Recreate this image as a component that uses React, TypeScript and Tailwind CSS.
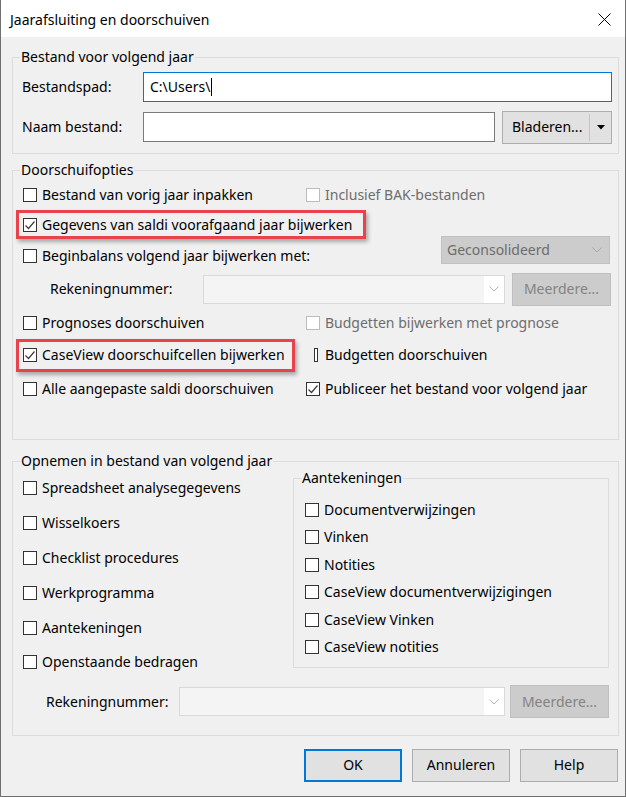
import clsx from "clsx";

const FONT = "font-['Noto_Sans',sans-serif]";

function Check() {
  return (
    <svg width="12" height="12" viewBox="0 0 12 12" fill="none">
      <polyline points="1.5,6.5 4.5,9.5 10.5,2.5" stroke="#3c3c3c" strokeWidth="1.2" />
    </svg>
  );
}

function Box({ checked, disabled }: { checked?: boolean; disabled?: boolean }) {
  return (
    <span
      className={clsx(
        "flex h-[14px] w-[14px] shrink-0 items-center justify-center border bg-white",
        disabled ? "border-[#bcbcbc]" : "border-[#333333]",
      )}
    >
      {checked ? <Check /> : null}
    </span>
  );
}

function CheckItem({
  label,
  checked,
  disabled,
}: {
  label: string;
  checked?: boolean;
  disabled?: boolean;
}) {
  return (
    <div className="flex items-center gap-[5px] whitespace-nowrap">
      <Box checked={checked} disabled={disabled} />
      <span className={disabled ? "text-[#6d6d6d]" : "text-black"}>{label}</span>
    </div>
  );
}

function Chevron({ color = "#a6a6a6" }: { color?: string }) {
  return (
    <svg width="10" height="6" viewBox="0 0 10 6" fill="none">
      <polyline points="0.5,0.5 5,5 9.5,0.5" stroke={color} strokeWidth="1" />
    </svg>
  );
}

function DisabledCombo({ width }: { width: string }) {
  return (
    <div
      className={clsx(
        "flex h-[29px] items-stretch border border-[#d9d9d9] bg-[#f4f4f4]",
        width,
      )}
    >
      <div className="flex-1" />
      <div className="flex w-[20px] items-center justify-center bg-white">
        <Chevron color="#b4b4b4" />
      </div>
    </div>
  );
}

function DisabledButton({ label, width, height }: { label: string; width: string; height: string }) {
  return (
    <div
      className={clsx(
        "flex items-center justify-center border border-[#bfbfbf] bg-[#cccccc] text-[#838383]",
        width,
        height,
      )}
    >
      {label}
    </div>
  );
}

function Button({ label, primary }: { label: string; primary?: boolean }) {
  return (
    <button
      type="button"
      className={clsx(
        "flex h-[33px] w-[98px] items-center justify-center bg-[#e1e1e1] text-black",
        primary ? "border-2 border-[#0078d7]" : "border border-[#adadad]",
      )}
    >
      {label}
    </button>
  );
}

function RedMark({ className }: { className: string }) {
  return (
    <div
      className={clsx(
        "pointer-events-none absolute border-[3px] border-[#e8434b] shadow-[2px_3px_4px_rgba(0,0,0,0.3)]",
        className,
      )}
    />
  );
}

export default function App() {
  return (
    <div
      className={clsx(
        "flex h-[797px] w-[626px] flex-col border-x border-b border-[#707070] bg-[#f0f0f0] text-[14px] leading-[20px] text-black",
        FONT,
      )}
    >
      {/* title bar */}
      <div className="flex h-[37px] shrink-0 items-center justify-between bg-white pl-[9px] pr-[14px] pt-[2px]">
        <span>Jaarafsluiting en doorschuiven</span>
        <svg width="13" height="13" viewBox="0 0 13 13" fill="none">
          <path d="M0.5 0.5L12.5 12.5M12.5 0.5L0.5 12.5" stroke="#000" strokeWidth="1" />
        </svg>
      </div>

      {/* Bestand voor volgend jaar */}
      <fieldset className="ml-[11px] mt-[10px] w-[607px] border border-[#dcdcdc] px-0">
        <legend className="ml-[7px] px-[1px]">Bestand voor volgend jaar</legend>
        <div className="flex flex-col pb-[10px] pl-[9px] pt-[5px]">
          <div className="flex h-[30px] items-center">
            <span className="w-[121px]">Bestandspad:</span>
            <div className="flex h-[30px] w-[469px] items-center border border-[#0078d7] bg-white pl-[6px]">
              <span>C:\Users\</span>
              <span className="ml-[1px] h-[18px] w-px bg-black" />
            </div>
          </div>
          <div className="mt-[9px] flex h-[32px] items-center">
            <span className="w-[121px]">Naam bestand:</span>
            <div className="h-[30px] w-[352px] border border-[#7a7a7a] bg-white" />
            <div className="ml-[7px] flex h-[33px] w-[110px] items-stretch border border-[#adadad] bg-[#e1e1e1]">
              <span className="flex flex-1 items-center pl-[9px]">Bladeren...</span>
              <span className="my-[2px] w-px bg-[#c4c4c4]" />
              <span className="flex w-[21px] items-center justify-center">
                <svg width="8" height="5" viewBox="0 0 8 5">
                  <polygon points="0,0 8,0 4,4.5" fill="#000" />
                </svg>
              </span>
            </div>
          </div>
        </div>
      </fieldset>

      {/* Doorschuifopties */}
      <fieldset className="ml-[11px] mt-[6px] w-[607px] border border-[#dcdcdc] px-0">
        <legend className="ml-[7px] px-[1px]">Doorschuifopties</legend>
        <div className="flex flex-col pb-[31px] pl-[10px]">
          <div className="flex h-[30px] items-center">
            <div className="w-[283px]">
              <CheckItem label="Bestand van vorig jaar inpakken" />
            </div>
            <CheckItem label="Inclusief BAK-bestanden" disabled />
          </div>
          <div className="relative flex h-[30px] items-center">
            <CheckItem label="Gegevens van saldi voorafgaand jaar bijwerken" checked />
            <RedMark className="-left-[7px] top-0 h-[29px] w-[350px]" />
          </div>
          <div className="flex h-[32px] items-center">
            <div className="w-[283px]">
              <CheckItem label="Beginbalans volgend jaar bijwerken met:" />
            </div>
            <div className="mb-[13px] ml-[135px] flex h-[28px] w-[169px] items-center justify-between border border-[#c0c0c0] bg-[#cccccc] pl-[5px] pr-[7px] text-[#6d6d6d]">
              <span>Geconsolideerd</span>
              <Chevron color="#a8a8a8" />
            </div>
          </div>
          <div className="flex h-[34px] items-center">
            <span className="w-[180px] pl-[27px]">Rekeningnummer:</span>
            <DisabledCombo width="w-[302px]" />
            <div className="ml-[7px]">
              <DisabledButton label="Meerdere..." width="w-[99px]" height="h-[33px]" />
            </div>
          </div>
          <div className="flex h-[34px] items-center">
            <div className="w-[283px]">
              <CheckItem label="Prognoses doorschuiven" />
            </div>
            <CheckItem label="Budgetten bijwerken met prognose" disabled />
          </div>
          <div className="relative flex h-[30px] items-center">
            <div className="w-[283px]">
              <CheckItem label="CaseView doorschuifcellen bijwerken" checked />
            </div>
            <div className="flex items-center whitespace-nowrap">
              <span className="ml-[8px] h-[14px] w-[4px] border border-[#333333] bg-white" />
              <span className="ml-[7px]">Budgetten doorschuiven</span>
            </div>
            <RedMark className="-left-[7px] -top-[1px] h-[33px] w-[279px]" />
          </div>
          <div className="flex h-[38px] items-center">
            <div className="w-[283px]">
              <CheckItem label="Alle aangepaste saldi doorschuiven" />
            </div>
            <CheckItem label="Publiceer het bestand voor volgend jaar" checked />
          </div>
        </div>
      </fieldset>

      {/* Opnemen in bestand van volgend jaar */}
      <fieldset className="ml-[11px] mt-[11px] w-[607px] border border-[#dcdcdc] px-0">
        <legend className="ml-[7px] px-[1px]">Opnemen in bestand van volgend jaar</legend>
        <div className="flex flex-col pb-[16px] pl-[10px]">
          <div className="flex items-start">
            <div className="flex w-[270px] flex-col">
              {[
                "Spreadsheet analysegegevens",
                "Wisselkoers",
                "Checklist procedures",
                "Werkprogramma",
                "Aantekeningen",
                "Openstaande bedragen",
              ].map((label) => (
                <div key={label} className="flex h-[34.8px] items-center">
                  <CheckItem label={label} />
                </div>
              ))}
            </div>
            <fieldset className="-mt-[3px] w-[316px] border border-[#dcdcdc] px-0">
              <legend className="ml-[7px] px-[1px]">Aantekeningen</legend>
              <div className="flex flex-col pb-[6px] pl-[11px] pt-[8px]">
                {[
                  "Documentverwijzingen",
                  "Vinken",
                  "Notities",
                  "CaseView documentverwijzigingen",
                  "CaseView Vinken",
                  "CaseView notities",
                ].map((label) => (
                  <div key={label} className="flex h-[27.5px] items-center">
                    <CheckItem label={label} />
                  </div>
                ))}
              </div>
            </fieldset>
          </div>
          <div className="mt-[5px] flex h-[34px] items-center">
            <span className="w-[156px] pl-[23px]">Rekeningnummer:</span>
            <DisabledCombo width="w-[326px]" />
            <div className="ml-[5px]">
              <DisabledButton label="Meerdere..." width="w-[99px]" height="h-[33px]" />
            </div>
          </div>
        </div>
      </fieldset>

      {/* buttons */}
      <div className="mt-[13px] flex justify-end gap-[10px] pr-[7px]">
        <Button label="OK" primary />
        <Button label="Annuleren" />
        <Button label="Help" />
      </div>
    </div>
  );
}
